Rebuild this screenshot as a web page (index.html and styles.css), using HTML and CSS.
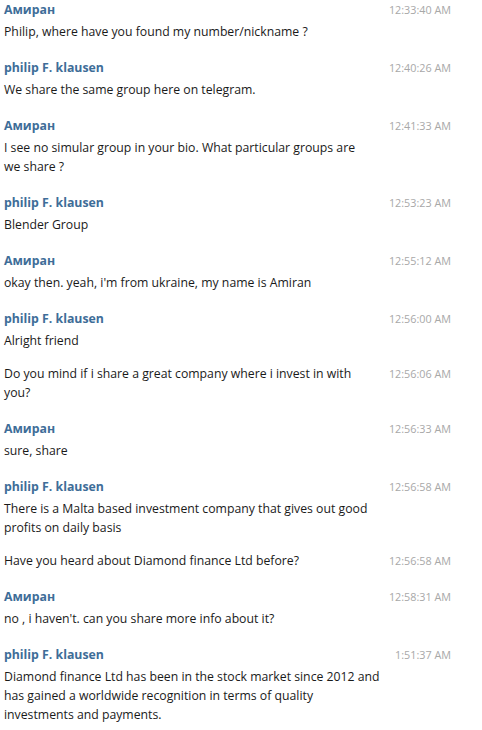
FILE: index.html
```html
<!DOCTYPE html>
<html lang="en">
<head>
    <meta charset="UTF-8">
    <title>Chat history</title>
    <link rel="stylesheet" href="styles.css">
</head>
<body>
    <div class="history">
        <div class="group">
            <div class="row"><span class="name">Амиран</span><span class="time">12:33:40 AM</span></div>
            <div class="msg"><p>Philip, where have you found my number/nickname ?</p></div>
        </div>
        <div class="group">
            <div class="row"><span class="name">philip F. klausen</span><span class="time">12:40:26 AM</span></div>
            <div class="msg"><p>We share the same group here on telegram.</p></div>
        </div>
        <div class="group">
            <div class="row"><span class="name">Амиран</span><span class="time">12:41:33 AM</span></div>
            <div class="msg"><p>I see no simular group in your bio. What particular groups are<br>we share ?</p></div>
        </div>
        <div class="group">
            <div class="row"><span class="name">philip F. klausen</span><span class="time">12:53:23 AM</span></div>
            <div class="msg"><p>Blender Group</p></div>
        </div>
        <div class="group">
            <div class="row"><span class="name">Амиран</span><span class="time">12:55:12 AM</span></div>
            <div class="msg"><p>okay then. yeah, i'm from ukraine, my name is Amiran</p></div>
        </div>
        <div class="group">
            <div class="row"><span class="name">philip F. klausen</span><span class="time">12:56:00 AM</span></div>
            <div class="msg"><p>Alright friend</p></div>
            <div class="msg next"><p>Do you mind if i share a great company where i invest in with<br>you?</p><span class="time">12:56:06 AM</span></div>
        </div>
        <div class="group">
            <div class="row"><span class="name">Амиран</span><span class="time">12:56:33 AM</span></div>
            <div class="msg"><p>sure, share</p></div>
        </div>
        <div class="group">
            <div class="row"><span class="name">philip F. klausen</span><span class="time">12:56:58 AM</span></div>
            <div class="msg"><p>There is a Malta based investment company that gives out good<br>profits on daily basis</p></div>
            <div class="msg next"><p>Have you heard about Diamond finance Ltd before?</p><span class="time">12:56:58 AM</span></div>
        </div>
        <div class="group">
            <div class="row"><span class="name">Амиран</span><span class="time">12:58:31 AM</span></div>
            <div class="msg"><p>no , i haven't. can you share more info about it?</p></div>
        </div>
        <div class="group">
            <div class="row"><span class="name">philip F. klausen</span><span class="time">1:51:37 AM</span></div>
            <div class="msg"><p>Diamond finance Ltd has been in the stock market since 2012 and<br>has gained a worldwide recognition in terms of quality<br>investments and payments.</p></div>
        </div>
    </div>
</body>
</html>
```

FILE: styles.css
```css
body {
    margin: 0;
    background: #fff;
    font-family: "Open Sans", "Liberation Sans", sans-serif;
    color: #1a1a1a;
}
.history {
    padding: 0 31px 0 4px;
}
.group {
    padding-bottom: 17px;
}
.row,
.msg {
    display: flex;
    justify-content: space-between;
    align-items: flex-start;
}
.name {
    font-weight: 700;
    font-size: 12.3px;
    line-height: 20px;
    color: #3e6d98;
}
.time {
    white-space: nowrap;
    font-size: 10.8px;
    line-height: 20px;
    color: #a8a8a8;
}
.msg {
    margin-top: 2px;
}
.msg.next {
    margin-top: 14px;
}
.msg .time {
    line-height: 19px;
}
.msg p {
    margin: 0;
    font-size: 12.25px;
    line-height: 19px;
    white-space: nowrap;
}
```
